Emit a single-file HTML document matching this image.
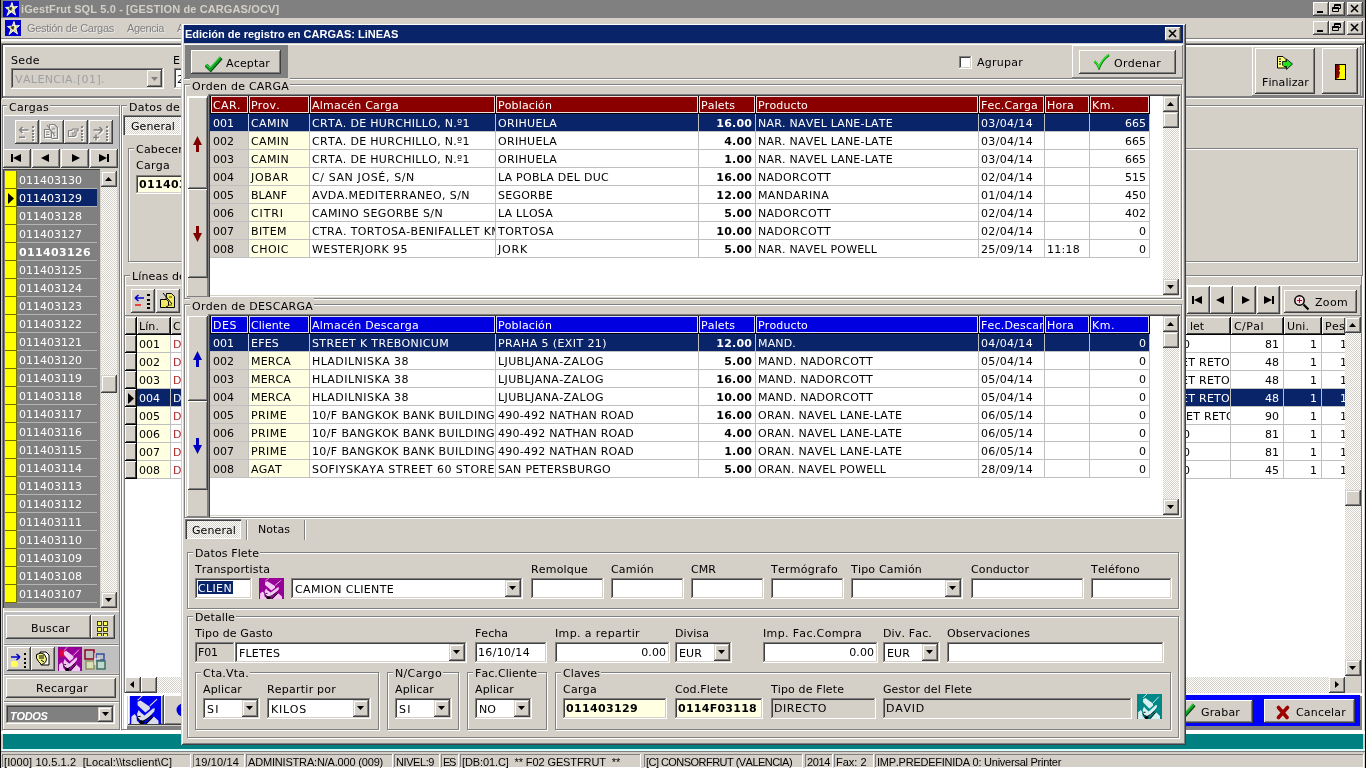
<!DOCTYPE html>
<html lang="es"><head><meta charset="utf-8"><title>iGestFrut SQL 5.0 - GESTION de CARGAS/OCV</title>
<style>
*{box-sizing:border-box;margin:0;padding:0}
html,body{width:1366px;height:768px;overflow:hidden;background:#d4d0c8}
#w{left:0;top:0;width:1366px;height:768px;will-change:transform}
body{position:relative;font-family:"DejaVu Sans","Liberation Sans",sans-serif;font-size:11px;line-height:14px;color:#000;font-kerning:none;-webkit-font-smoothing:antialiased}
div,span,svg,b,i{position:absolute;white-space:pre}
.t{height:14px}
.tah{font-family:"Liberation Sans","DejaVu Sans",sans-serif}
.w{color:#fff}
.b{font-weight:bold}
.r{background:#d4d0c8;box-shadow:inset -1px -1px #404040,inset 1px 1px #fff,inset -2px -2px #808080,inset 2px 2px #d4d0c8}
.rs{background:#d4d0c8;box-shadow:inset -1px -1px #404040,inset 1px 1px #d4d0c8,inset -2px -2px #808080,inset 2px 2px #fff}
.r1{background:#d4d0c8;box-shadow:inset -1px -1px #808080,inset 1px 1px #fff}
.s{background:#fff;box-shadow:inset -1px -1px #fff,inset 1px 1px #808080,inset -2px -2px #d4d0c8,inset 2px 2px #404040}
.s1{box-shadow:inset -1px -1px #fff,inset 1px 1px #808080}
.g{border:1px solid #808080;box-shadow:inset 1px 1px #fff,1px 1px #fff}
.gl{background:#d4d0c8;padding:0 2px}
.f{background:#d4d0c8}
.dis{color:#808080;text-shadow:1px 1px rgba(255,255,255,.55)}
.dith{background-image:conic-gradient(#fff 25%,#d4d0c8 0 50%,#fff 0 75%,#d4d0c8 0);background-size:2px 2px}
.hc{background:#8a0000;border:1px solid #f4dcdc}
.hb{background:#0000e0;border:1px solid #dcdcf8}
.hg{background:#d4d0c8;box-shadow:inset 1px 1px #fff,inset -1px -1px #404040}
</style></head>
<body><div id="w">
<div style="left:0px;top:0px;width:1366px;height:18px;background:#808080"></div>
<svg style="left:3px;top:1px" width="16" height="16"><rect width="16" height="16" fill="#0000c8"/><polygon points="9,1.5 12.5,14 2.5,6.5 14.5,5.5 4,14.5" fill="#d8d860" stroke="#fff" stroke-width=".9" stroke-linejoin="round"/><polygon points="6,6.5 9,6 8.5,9.5 6.5,9" fill="#282838"/></svg>
<span class="t tah b" style="left:21px;top:2px;letter-spacing:0.12px;color:#d4d0c8">iGestFrut SQL 5.0 - [GESTION de CARGAS/OCV]</span>
<div class="r" style="left:1313px;top:2px;width:16px;height:14px;"></div>
<div style="left:1317px;top:11px;width:6px;height:2px;background:#000"></div>
<div class="r" style="left:1329px;top:2px;width:16px;height:14px;"></div>
<svg style="left:1329px;top:2px" width="16" height="14"><path d="M5.5 2.5h6v4h-6zM5.5 3.5h6M3.5 5.5h6v4h-6zM3.5 6.5h6" fill="none" stroke="#000"/></svg>
<div class="r" style="left:1347px;top:2px;width:16px;height:14px;"></div>
<svg style="left:1347px;top:2px" width="16" height="14"><path d="M4 3l7 7M11 3l-7 7" stroke="#000" stroke-width="1.6"/></svg>
<svg style="left:5px;top:20px" width="16" height="16"><rect width="16" height="16" fill="#0000c8"/><polygon points="9,1.5 12.5,14 2.5,6.5 14.5,5.5 4,14.5" fill="#d8d860" stroke="#fff" stroke-width=".9" stroke-linejoin="round"/><polygon points="6,6.5 9,6 8.5,9.5 6.5,9" fill="#282838"/></svg>
<span class="t dis tah" style="left:27px;top:21px;letter-spacing:-0.28px;">Gestión de Cargas</span>
<span class="t dis tah" style="left:127px;top:21px;letter-spacing:-0.39px;">Agencia</span>
<span class="t dis tah" style="left:177px;top:21px;">A</span>
<div class="r" style="left:1313px;top:21px;width:16px;height:14px;"></div>
<div style="left:1317px;top:30px;width:6px;height:2px;background:#000"></div>
<div class="r" style="left:1329px;top:21px;width:16px;height:14px;"></div>
<svg style="left:1329px;top:21px" width="16" height="14"><path d="M5.5 2.5h6v4h-6zM5.5 3.5h6M3.5 5.5h6v4h-6zM3.5 6.5h6" fill="none" stroke="#000"/></svg>
<div class="r" style="left:1347px;top:21px;width:16px;height:14px;"></div>
<svg style="left:1347px;top:21px" width="16" height="14"><path d="M4 3l7 7M11 3l-7 7" stroke="#000" stroke-width="1.6"/></svg>
<div style="left:1px;top:39px;width:1364px;height:2px;background:#fff"></div>
<div style="left:0px;top:0px;width:1px;height:768px;background:#000"></div>
<div style="left:1365px;top:0px;width:1px;height:768px;background:#000"></div>
<div style="left:1px;top:38px;width:1364px;height:1px;background:#808080"></div>
<div style="left:1px;top:43px;width:1364px;height:56px;box-shadow:inset 1px 1px #808080,inset -1px -1px #fff,inset 2px 2px #404040,inset -3px -3px #808080,inset 4px 4px #fff"></div>
<span class="t" style="left:11px;top:54px;letter-spacing:0.38px;">Sede</span>
<div class="s" style="left:11px;top:68px;width:153px;height:21px;background:#d4d0c8;"></div>
<span class="t" style="left:15px;top:73px;letter-spacing:0.40px;color:#a0a0a0;text-shadow:none">VALENCIA.[01].</span>
<div class="r" style="left:147px;top:70px;width:15px;height:17px;"></div>
<svg style="left:151px;top:77px" width="7" height="4"><polygon points="0,0 7,0 3.5,4" fill="#808080"/></svg>
<span class="t" style="left:173px;top:54px;">E</span>
<div class="s" style="left:174px;top:68px;width:40px;height:21px;background:#fff;"></div>
<span class="t" style="left:177px;top:73px;">2</span>
<div class="r1" style="left:1252px;top:46px;width:109px;height:50px;"></div>
<div class="r" style="left:1255px;top:48px;width:60px;height:46px;"></div>
<span class="t" style="left:1262px;top:76px;letter-spacing:0.08px;">Finalizar</span>
<svg style="left:1277px;top:56px" width="17" height="16"><path d="M.5 .5h5.5l3 3v8.5H.5z" fill="#ffff80" stroke="#000"/><path d="M2 3h2M2 5.5h2M2 8h2" stroke="#000"/><path d="M5.5 5.5h4v-2.5l6 5-6 5.5v-3h-2.5l-1.5-1.5z" fill="#20e020" stroke="#000" stroke-width=".8"/></svg>
<div class="r" style="left:1322px;top:48px;width:36px;height:46px;"></div>
<svg style="left:1335px;top:64px" width="12" height="16"><rect x=".5" y=".5" width="10" height="15" fill="#ffff00" stroke="#000"/><path d="M1 1h3.5l.5 7-1 5.5L1 15z" fill="#800000"/><rect x="4" y="6" width="1" height="1.5" fill="#ff0"/></svg>
<div class="g" style="left:2px;top:105px;width:118px;height:625px;"></div>
<div class="f" style="left:7px;top:99px;width:43px;height:14px;"></div>
<span class="t" style="left:9px;top:101px;letter-spacing:0.27px;">Cargas</span>
<div style="left:4px;top:115px;width:115px;height:34px;background:#c0c0c0;box-shadow:inset 0 1px #fff"></div>
<div class="r" style="left:15px;top:120px;width:24px;height:24px;"></div>
<svg style="left:15px;top:120px" width="24" height="24"><g transform="translate(1,1)"><rect x="17" y="6" width="2" height="2" fill="#fff"/><rect x="17" y="10" width="2" height="2" fill="#fff"/><rect x="17" y="13" width="2" height="2" fill="#fff"/><rect x="17" y="16" width="2" height="2" fill="#fff"/><rect x="17" y="19" width="2" height="2" fill="#fff"/><path d="M4.5 10h9M4.5 10l3-3M4.5 10l3 3" stroke="#fff" stroke-width="1.6" fill="none"/><rect x="4" y="16.5" width="6" height="1.6" fill="#fff"/></g><rect x="17" y="6" width="2" height="2" fill="#808080"/><rect x="17" y="10" width="2" height="2" fill="#808080"/><rect x="17" y="13" width="2" height="2" fill="#808080"/><rect x="17" y="16" width="2" height="2" fill="#808080"/><rect x="17" y="19" width="2" height="2" fill="#808080"/><path d="M4.5 10h9M4.5 10l3-3M4.5 10l3 3" stroke="#808080" stroke-width="1.6" fill="none"/><rect x="4" y="16.5" width="6" height="1.6" fill="#808080"/></svg>
<div class="r" style="left:40px;top:120px;width:24px;height:24px;"></div>
<svg style="left:40px;top:120px" width="24" height="24"><g transform="translate(1,1)"><path d="M9.5 4.5h5l3 3v11h-6M9.5 4.5v4M7 5l8 11M4.5 9.5h5l2 2v6h-7zM12 9h3M13 13h2M6 12h3M6 14.5h3" stroke="#fff" stroke-width="1.1" fill="none"/></g><path d="M9.5 4.5h5l3 3v11h-6M9.5 4.5v4M7 5l8 11M4.5 9.5h5l2 2v6h-7zM12 9h3M13 13h2M6 12h3M6 14.5h3" stroke="#808080" stroke-width="1.1" fill="none"/></svg>
<div class="r" style="left:64px;top:120px;width:24px;height:24px;"></div>
<svg style="left:64px;top:120px" width="24" height="24"><g transform="translate(1,1)"><rect x="17" y="6" width="2" height="2" fill="#fff"/><rect x="17" y="10" width="2" height="2" fill="#fff"/><rect x="17" y="13" width="2" height="2" fill="#fff"/><rect x="17" y="16" width="2" height="2" fill="#fff"/><rect x="17" y="19" width="2" height="2" fill="#fff"/><path d="M4.5 10.5h3l1.5-1.5h5v2h-4M4.5 10.5v6h6l1.5-1.5v-3M8 13h3M8 15h2.5" stroke="#fff" stroke-width="1.2" fill="none"/></g><rect x="17" y="6" width="2" height="2" fill="#808080"/><rect x="17" y="10" width="2" height="2" fill="#808080"/><rect x="17" y="13" width="2" height="2" fill="#808080"/><rect x="17" y="16" width="2" height="2" fill="#808080"/><rect x="17" y="19" width="2" height="2" fill="#808080"/><path d="M4.5 10.5h3l1.5-1.5h5v2h-4M4.5 10.5v6h6l1.5-1.5v-3M8 13h3M8 15h2.5" stroke="#808080" stroke-width="1.2" fill="none"/></svg>
<div class="r" style="left:89px;top:120px;width:24px;height:24px;"></div>
<svg style="left:89px;top:120px" width="24" height="24"><g transform="translate(1,1)"><rect x="17" y="6" width="2" height="2" fill="#fff"/><rect x="17" y="10" width="2" height="2" fill="#fff"/><rect x="17" y="13" width="2" height="2" fill="#fff"/><rect x="17" y="16" width="2" height="2" fill="#fff"/><rect x="17" y="19" width="2" height="2" fill="#fff"/><path d="M4.5 10h9M13.5 10l-3-3M13.5 10l-3 3M4 17.5h6M7 14.5v6" stroke="#fff" stroke-width="1.6" fill="none"/><path d="M11.5 12l-2.5 2.5" stroke="#fff"/></g><rect x="17" y="6" width="2" height="2" fill="#808080"/><rect x="17" y="10" width="2" height="2" fill="#808080"/><rect x="17" y="13" width="2" height="2" fill="#808080"/><rect x="17" y="16" width="2" height="2" fill="#808080"/><rect x="17" y="19" width="2" height="2" fill="#808080"/><path d="M4.5 10h9M13.5 10l-3-3M13.5 10l-3 3M4 17.5h6M7 14.5v6" stroke="#808080" stroke-width="1.6" fill="none"/><path d="M11.5 12l-2.5 2.5" stroke="#808080"/></svg>
<div class="r" style="left:3px;top:149px;width:28px;height:19px;"></div>
<div style="left:11px;top:154px;width:2px;height:8px;background:#000"></div>
<svg style="left:13px;top:154px" width="8" height="8"><polygon points="8,0 8,8 0,4.0" fill="#000"/></svg>
<div class="r" style="left:32px;top:149px;width:28px;height:19px;"></div>
<svg style="left:41px;top:154px" width="8" height="8"><polygon points="8,0 8,8 0,4.0" fill="#000"/></svg>
<div class="r" style="left:61px;top:149px;width:28px;height:19px;"></div>
<svg style="left:72px;top:154px" width="8" height="8"><polygon points="0,0 0,8 8,4.0" fill="#000"/></svg>
<div class="r" style="left:90px;top:149px;width:28px;height:19px;"></div>
<svg style="left:99px;top:154px" width="8" height="8"><polygon points="0,0 0,8 8,4.0" fill="#000"/></svg>
<div style="left:107px;top:154px;width:2px;height:8px;background:#000"></div>
<div style="left:3px;top:169px;width:97px;height:439px;background:#808080;box-shadow:inset 1px 1px #404040"></div>
<div style="left:5px;top:171px;width:12px;height:18px;background:#ffff00;box-shadow:inset -1px -1px #707000"></div>
<div style="left:17px;top:171px;width:80px;height:17px;background:#808080"></div>
<div style="left:17px;top:188px;width:80px;height:1px;background:#b4b4b4"></div>
<span class="t w" style="left:19px;top:174px;">011403130</span>
<div style="left:5px;top:189px;width:12px;height:18px;background:#ffff00;box-shadow:inset -1px -1px #707000"></div>
<div style="left:17px;top:189px;width:80px;height:17px;background:#0a246a"></div>
<div style="left:17px;top:206px;width:80px;height:1px;background:#b4b4b4"></div>
<span class="t w" style="left:19px;top:192px;">011403129</span>
<svg style="left:8px;top:193px" width="6" height="11"><polygon points="0,0 0,11 6,5.5" fill="#000"/></svg>
<div style="left:5px;top:207px;width:12px;height:18px;background:#ffff00;box-shadow:inset -1px -1px #707000"></div>
<div style="left:17px;top:207px;width:80px;height:17px;background:#808080"></div>
<div style="left:17px;top:224px;width:80px;height:1px;background:#b4b4b4"></div>
<span class="t w" style="left:19px;top:210px;">011403128</span>
<div style="left:5px;top:225px;width:12px;height:18px;background:#ffff00;box-shadow:inset -1px -1px #707000"></div>
<div style="left:17px;top:225px;width:80px;height:17px;background:#808080"></div>
<div style="left:17px;top:242px;width:80px;height:1px;background:#b4b4b4"></div>
<span class="t w" style="left:19px;top:228px;">011403127</span>
<div style="left:5px;top:243px;width:12px;height:18px;background:#ffff00;box-shadow:inset -1px -1px #707000"></div>
<div style="left:17px;top:243px;width:80px;height:17px;background:#808080"></div>
<div style="left:17px;top:260px;width:80px;height:1px;background:#b4b4b4"></div>
<span class="t w b" style="left:19px;top:246px;letter-spacing:0.35px;">011403126</span>
<div style="left:5px;top:261px;width:12px;height:18px;background:#ffff00;box-shadow:inset -1px -1px #707000"></div>
<div style="left:17px;top:261px;width:80px;height:17px;background:#808080"></div>
<div style="left:17px;top:278px;width:80px;height:1px;background:#b4b4b4"></div>
<span class="t w" style="left:19px;top:264px;">011403125</span>
<div style="left:5px;top:279px;width:12px;height:18px;background:#ffff00;box-shadow:inset -1px -1px #707000"></div>
<div style="left:17px;top:279px;width:80px;height:17px;background:#808080"></div>
<div style="left:17px;top:296px;width:80px;height:1px;background:#b4b4b4"></div>
<span class="t w" style="left:19px;top:282px;">011403124</span>
<div style="left:5px;top:297px;width:12px;height:18px;background:#ffff00;box-shadow:inset -1px -1px #707000"></div>
<div style="left:17px;top:297px;width:80px;height:17px;background:#808080"></div>
<div style="left:17px;top:314px;width:80px;height:1px;background:#b4b4b4"></div>
<span class="t w" style="left:19px;top:300px;">011403123</span>
<div style="left:5px;top:315px;width:12px;height:18px;background:#ffff00;box-shadow:inset -1px -1px #707000"></div>
<div style="left:17px;top:315px;width:80px;height:17px;background:#808080"></div>
<div style="left:17px;top:332px;width:80px;height:1px;background:#b4b4b4"></div>
<span class="t w" style="left:19px;top:318px;">011403122</span>
<div style="left:5px;top:333px;width:12px;height:18px;background:#ffff00;box-shadow:inset -1px -1px #707000"></div>
<div style="left:17px;top:333px;width:80px;height:17px;background:#808080"></div>
<div style="left:17px;top:350px;width:80px;height:1px;background:#b4b4b4"></div>
<span class="t w" style="left:19px;top:336px;">011403121</span>
<div style="left:5px;top:351px;width:12px;height:18px;background:#ffff00;box-shadow:inset -1px -1px #707000"></div>
<div style="left:17px;top:351px;width:80px;height:17px;background:#808080"></div>
<div style="left:17px;top:368px;width:80px;height:1px;background:#b4b4b4"></div>
<span class="t w" style="left:19px;top:354px;">011403120</span>
<div style="left:5px;top:369px;width:12px;height:18px;background:#ffff00;box-shadow:inset -1px -1px #707000"></div>
<div style="left:17px;top:369px;width:80px;height:17px;background:#808080"></div>
<div style="left:17px;top:386px;width:80px;height:1px;background:#b4b4b4"></div>
<span class="t w" style="left:19px;top:372px;">011403119</span>
<div style="left:5px;top:387px;width:12px;height:18px;background:#ffff00;box-shadow:inset -1px -1px #707000"></div>
<div style="left:17px;top:387px;width:80px;height:17px;background:#808080"></div>
<div style="left:17px;top:404px;width:80px;height:1px;background:#b4b4b4"></div>
<span class="t w" style="left:19px;top:390px;">011403118</span>
<div style="left:5px;top:405px;width:12px;height:18px;background:#ffff00;box-shadow:inset -1px -1px #707000"></div>
<div style="left:17px;top:405px;width:80px;height:17px;background:#808080"></div>
<div style="left:17px;top:422px;width:80px;height:1px;background:#b4b4b4"></div>
<span class="t w" style="left:19px;top:408px;">011403117</span>
<div style="left:5px;top:423px;width:12px;height:18px;background:#ffff00;box-shadow:inset -1px -1px #707000"></div>
<div style="left:17px;top:423px;width:80px;height:17px;background:#808080"></div>
<div style="left:17px;top:440px;width:80px;height:1px;background:#b4b4b4"></div>
<span class="t w" style="left:19px;top:426px;">011403116</span>
<div style="left:5px;top:441px;width:12px;height:18px;background:#ffff00;box-shadow:inset -1px -1px #707000"></div>
<div style="left:17px;top:441px;width:80px;height:17px;background:#808080"></div>
<div style="left:17px;top:458px;width:80px;height:1px;background:#b4b4b4"></div>
<span class="t w" style="left:19px;top:444px;">011403115</span>
<div style="left:5px;top:459px;width:12px;height:18px;background:#ffff00;box-shadow:inset -1px -1px #707000"></div>
<div style="left:17px;top:459px;width:80px;height:17px;background:#808080"></div>
<div style="left:17px;top:476px;width:80px;height:1px;background:#b4b4b4"></div>
<span class="t w" style="left:19px;top:462px;">011403114</span>
<div style="left:5px;top:477px;width:12px;height:18px;background:#ffff00;box-shadow:inset -1px -1px #707000"></div>
<div style="left:17px;top:477px;width:80px;height:17px;background:#808080"></div>
<div style="left:17px;top:494px;width:80px;height:1px;background:#b4b4b4"></div>
<span class="t w" style="left:19px;top:480px;">011403113</span>
<div style="left:5px;top:495px;width:12px;height:18px;background:#ffff00;box-shadow:inset -1px -1px #707000"></div>
<div style="left:17px;top:495px;width:80px;height:17px;background:#808080"></div>
<div style="left:17px;top:512px;width:80px;height:1px;background:#b4b4b4"></div>
<span class="t w" style="left:19px;top:498px;">011403112</span>
<div style="left:5px;top:513px;width:12px;height:18px;background:#ffff00;box-shadow:inset -1px -1px #707000"></div>
<div style="left:17px;top:513px;width:80px;height:17px;background:#808080"></div>
<div style="left:17px;top:530px;width:80px;height:1px;background:#b4b4b4"></div>
<span class="t w" style="left:19px;top:516px;">011403111</span>
<div style="left:5px;top:531px;width:12px;height:18px;background:#ffff00;box-shadow:inset -1px -1px #707000"></div>
<div style="left:17px;top:531px;width:80px;height:17px;background:#808080"></div>
<div style="left:17px;top:548px;width:80px;height:1px;background:#b4b4b4"></div>
<span class="t w" style="left:19px;top:534px;">011403110</span>
<div style="left:5px;top:549px;width:12px;height:18px;background:#ffff00;box-shadow:inset -1px -1px #707000"></div>
<div style="left:17px;top:549px;width:80px;height:17px;background:#808080"></div>
<div style="left:17px;top:566px;width:80px;height:1px;background:#b4b4b4"></div>
<span class="t w" style="left:19px;top:552px;">011403109</span>
<div style="left:5px;top:567px;width:12px;height:18px;background:#ffff00;box-shadow:inset -1px -1px #707000"></div>
<div style="left:17px;top:567px;width:80px;height:17px;background:#808080"></div>
<div style="left:17px;top:584px;width:80px;height:1px;background:#b4b4b4"></div>
<span class="t w" style="left:19px;top:570px;">011403108</span>
<div style="left:5px;top:585px;width:12px;height:18px;background:#ffff00;box-shadow:inset -1px -1px #707000"></div>
<div style="left:17px;top:585px;width:80px;height:17px;background:#808080"></div>
<div style="left:17px;top:602px;width:80px;height:1px;background:#b4b4b4"></div>
<span class="t w" style="left:19px;top:588px;">011403107</span>
<div class="dith" style="left:101px;top:171px;width:16px;height:437px;"></div>
<div class="rs" style="left:101px;top:171px;width:16px;height:16px;"></div>
<svg style="left:105px;top:177px" width="7" height="4"><polygon points="0,4 7,4 3.5,0" fill="#000"/></svg>
<div class="rs" style="left:101px;top:592px;width:16px;height:16px;"></div>
<svg style="left:105px;top:598px" width="7" height="4"><polygon points="0,0 7,0 3.5,4" fill="#000"/></svg>
<div class="rs" style="left:101px;top:375px;width:16px;height:18px;"></div>
<div style="left:4px;top:611px;width:115px;height:32px;background:#c0c0c0;box-shadow:inset 0 1px #fff"></div>
<div class="r" style="left:6px;top:615px;width:85px;height:24px;"></div>
<span class="t" style="left:31px;top:622px;letter-spacing:0.24px;">Buscar</span>
<div class="r" style="left:91px;top:615px;width:24px;height:24px;"></div>
<svg style="left:97px;top:621px" width="12" height="15"><rect x="0.5" y="0.5" width="4" height="4" fill="#ffff50" stroke="#303000" stroke-width=".9"/><rect x="6.5" y="0.5" width="4" height="4" fill="#ffff50" stroke="#303000" stroke-width=".9"/><rect x="0.5" y="6.5" width="4" height="4" fill="#ffff50" stroke="#303000" stroke-width=".9"/><rect x="6.5" y="6.5" width="4" height="4" fill="#ffff50" stroke="#303000" stroke-width=".9"/><rect x="0.5" y="12.5" width="4" height="4" fill="#ffff50" stroke="#303000" stroke-width=".9"/><rect x="6.5" y="12.5" width="4" height="4" fill="#ffff50" stroke="#303000" stroke-width=".9"/></svg>
<div style="left:4px;top:644px;width:115px;height:1px;background:#808080"></div>
<div style="left:4px;top:645px;width:115px;height:1px;background:#fff"></div>
<div style="left:4px;top:646px;width:115px;height:27px;background:#c0c0c0"></div>
<div class="r" style="left:7px;top:647px;width:24px;height:24px;"></div>
<svg style="left:7px;top:647px" width="24" height="24"><rect x="17" y="6" width="2" height="2"/><rect x="17" y="11" width="2" height="2"/><rect x="17" y="15" width="2" height="2"/><rect x="17" y="19" width="2" height="2"/><path d="M4 10h9M13 10l-3.5-3M13 10l-3.5 3" stroke="#0000d0" stroke-width="1.6" fill="none"/><rect x="4" y="14" width="7" height="6" rx="2" fill="#ffff60"/></svg>
<div class="r" style="left:31px;top:647px;width:24px;height:24px;"></div>
<svg style="left:31px;top:647px" width="24" height="24"><path d="M9 5h6l3 3v10h-8z" fill="#fff" stroke="#000"/><path d="M5.5 7.5q5-3 8 0l2 4q0 5-5 6l-3-3q-3-3-2-7z" fill="#f0f080" stroke="#000"/><path d="M8 9h5M8 11h5M10 13l3 2" stroke="#000"/></svg>
<svg style="left:58px;top:647px" width="24" height="24" viewBox="0 0 25 25" preserveAspectRatio="none"><rect width="25" height="25" fill="#960096"/><rect x="2" y="3" width="6" height="7" fill="#e00040"/><path d="M6.1 3.8L9.9 0M16 8.9l5.8-6.1" stroke="#f4c8f4" stroke-width=".9"/><path d="M6.1 5.2l2.4-1.2 7.5 5.6v2.1l-3.6 3.1-6.3-6.6zM7 12.5l1.5 2 3.2 2.9 6.8-6.2 1.5-.2-.3 2.6-5.7 6.9-3 2-4-1.5-1.4-5zM1 25l.2-6.7 2.6-2.3 1.4 2.3.4 3.7 2.9 3zM13.6 25l5.6-6.7 3.8 3.7v3z" fill="#f4c8f4"/><path d="M6.5 18.3h2M5.8 19.5q1.2 2.5 4.2 3 3-1 7.5-5.3M13 24.5l5.5-6" stroke="#000" fill="none" stroke-width=".9"/><ellipse cx="9.6" cy="23.6" rx="2.2" ry="1.4"/></svg>
<svg style="left:83px;top:647px" width="24" height="24"><rect x="2" y="3" width="9" height="9" fill="none" stroke="#900020" stroke-width="1.5"/><rect x="13" y="7" width="8" height="6" fill="none" stroke="#3050a0" stroke-width="1.5"/><rect x="3" y="14" width="8" height="8" fill="#d8e0b8" stroke="#909060" stroke-width="1.5"/><rect x="14" y="14" width="8" height="8" fill="#c0d8d0" stroke="#407060" stroke-width="1.5"/><path d="M11 12h6M12 6v12" stroke="#fff"/></svg>
<div style="left:4px;top:674px;width:115px;height:1px;background:#808080"></div>
<div style="left:4px;top:675px;width:115px;height:1px;background:#fff"></div>
<div class="r" style="left:6px;top:678px;width:110px;height:20px;"></div>
<span class="t" style="left:36px;top:682px;letter-spacing:0.25px;">Recargar</span>
<div style="left:4px;top:701px;width:115px;height:1px;background:#808080"></div>
<div style="left:4px;top:702px;width:115px;height:1px;background:#fff"></div>
<div class="s" style="left:6px;top:705px;width:109px;height:19px;background:#808080;"></div>
<span class="t w b tah" style="left:10px;top:709px;letter-spacing:-0.30px;font-style:italic">TODOS</span>
<div class="rs" style="left:98px;top:707px;width:15px;height:15px;"></div>
<svg style="left:102px;top:712px" width="7" height="4"><polygon points="0,0 7,0 3.5,4" fill="#000"/></svg>
<div class="g" style="left:121px;top:105px;width:1242px;height:625px;"></div>
<div class="f" style="left:127px;top:99px;width:54px;height:14px;"></div>
<span class="t" style="left:129px;top:101px;letter-spacing:0.22px;">Datos de</span>
<div class="dith" style="left:123px;top:115px;width:58px;height:20px;box-shadow:inset 1px 1px #808080,inset 2px 2px #404040,inset -1px -1px #fff"></div>
<span class="t" style="left:131px;top:120px;letter-spacing:0.09px;">General</span>
<div class="g" style="left:128px;top:148px;width:1230px;height:114px;"></div>
<div class="f" style="left:134px;top:142px;width:57px;height:14px;"></div>
<span class="t" style="left:136px;top:143px;letter-spacing:0.22px;">Cabecera</span>
<span class="t" style="left:136px;top:159px;letter-spacing:0.27px;">Carga</span>
<div class="s" style="left:136px;top:175px;width:60px;height:19px;background:#ffffe1;"></div>
<span class="t b" style="left:139px;top:178px;letter-spacing:0.35px;">011403</span>
<div class="g" style="left:124px;top:275px;width:1238px;height:455px;"></div>
<div class="f" style="left:130px;top:269px;width:57px;height:14px;"></div>
<span class="t" style="left:132px;top:270px;letter-spacing:0.15px;">Líneas de</span>
<div style="left:125px;top:285px;width:1236px;height:1px;background:#fff"></div>
<div style="left:125px;top:315px;width:1236px;height:1px;background:#808080"></div>
<div class="r" style="left:131px;top:289px;width:24px;height:24px;"></div>
<svg style="left:131px;top:289px" width="24" height="24"><rect x="16" y="5" width="3" height="2"/><rect x="16" y="10" width="3" height="2"/><rect x="16" y="14" width="3" height="2"/><rect x="16" y="18" width="3" height="2"/><path d="M4 9h9M4 9l3.5-3M4 9l3.5 3" stroke="#0000d0" stroke-width="1.6" fill="none"/><rect x="4" y="15" width="6" height="2" fill="#f04040"/></svg>
<div class="r" style="left:156px;top:289px;width:24px;height:24px;"></div>
<svg style="left:156px;top:289px" width="24" height="24"><path d="M10.5 4.5h5l3 3v11h-9z" fill="#f0e860" stroke="#000"/><path d="M7 4l9 11" stroke="#000"/><path d="M4.5 10.5h6l2 2v4l-3 2h-5z" fill="#f0e860" stroke="#000"/><path d="M13 8h3M13 16h3" stroke="#404000"/></svg>
<div style="left:125px;top:317px;width:1221px;height:360px;background:#fff"></div>
<div style="left:125px;top:317px;width:1221px;height:18px;background:#000"></div>
<div class="hg" style="left:125px;top:317px;width:11px;height:17px;"></div>
<div class="hg" style="left:137px;top:317px;width:33px;height:17px;"></div>
<div class="hg" style="left:171px;top:317px;width:60px;height:17px;"></div>
<span class="t" style="left:139px;top:320px;letter-spacing:0.09px;">Lín.</span>
<span class="t" style="left:173px;top:320px;">C</span>
<div class="hg" style="left:125px;top:335px;width:11px;height:17px;"></div>
<div style="left:125px;top:352px;width:12px;height:1px;background:#000"></div>
<div style="left:137px;top:335px;width:33px;height:17px;background:#ffffe1"></div>
<div style="left:171px;top:335px;width:12px;height:17px;background:#fff"></div>
<div style="left:137px;top:352px;width:50px;height:1px;background:#c0c0c0"></div>
<div style="left:170px;top:335px;width:1px;height:18px;background:#c0c0c0"></div>
<span class="t" style="left:139px;top:338px;">001</span>
<span class="t" style="left:173px;top:338px;color:#b02828">D</span>
<div class="hg" style="left:125px;top:353px;width:11px;height:17px;"></div>
<div style="left:125px;top:370px;width:12px;height:1px;background:#000"></div>
<div style="left:137px;top:353px;width:33px;height:17px;background:#ffffe1"></div>
<div style="left:171px;top:353px;width:12px;height:17px;background:#fff"></div>
<div style="left:137px;top:370px;width:50px;height:1px;background:#c0c0c0"></div>
<div style="left:170px;top:353px;width:1px;height:18px;background:#c0c0c0"></div>
<span class="t" style="left:139px;top:356px;">002</span>
<span class="t" style="left:173px;top:356px;color:#b02828">D</span>
<div class="hg" style="left:125px;top:371px;width:11px;height:17px;"></div>
<div style="left:125px;top:388px;width:12px;height:1px;background:#000"></div>
<div style="left:137px;top:371px;width:33px;height:17px;background:#ffffe1"></div>
<div style="left:171px;top:371px;width:12px;height:17px;background:#fff"></div>
<div style="left:137px;top:388px;width:50px;height:1px;background:#c0c0c0"></div>
<div style="left:170px;top:371px;width:1px;height:18px;background:#c0c0c0"></div>
<span class="t" style="left:139px;top:374px;">003</span>
<span class="t" style="left:173px;top:374px;color:#b02828">D</span>
<div class="hg" style="left:125px;top:389px;width:11px;height:17px;"></div>
<div style="left:125px;top:406px;width:12px;height:1px;background:#000"></div>
<div style="left:137px;top:389px;width:33px;height:17px;background:#0a246a"></div>
<div style="left:171px;top:389px;width:12px;height:17px;background:#0a246a"></div>
<div style="left:137px;top:406px;width:50px;height:1px;background:#c0c0c0"></div>
<div style="left:170px;top:389px;width:1px;height:18px;background:#c0c0c0"></div>
<span class="t w" style="left:139px;top:392px;">004</span>
<span class="t w" style="left:173px;top:392px;">D</span>
<svg style="left:128px;top:393px" width="6" height="11"><polygon points="0,0 0,11 6,5.5" fill="#000"/></svg>
<div class="hg" style="left:125px;top:407px;width:11px;height:17px;"></div>
<div style="left:125px;top:424px;width:12px;height:1px;background:#000"></div>
<div style="left:137px;top:407px;width:33px;height:17px;background:#ffffe1"></div>
<div style="left:171px;top:407px;width:12px;height:17px;background:#fff"></div>
<div style="left:137px;top:424px;width:50px;height:1px;background:#c0c0c0"></div>
<div style="left:170px;top:407px;width:1px;height:18px;background:#c0c0c0"></div>
<span class="t" style="left:139px;top:410px;">005</span>
<span class="t" style="left:173px;top:410px;color:#b02828">D</span>
<div class="hg" style="left:125px;top:425px;width:11px;height:17px;"></div>
<div style="left:125px;top:442px;width:12px;height:1px;background:#000"></div>
<div style="left:137px;top:425px;width:33px;height:17px;background:#ffffe1"></div>
<div style="left:171px;top:425px;width:12px;height:17px;background:#fff"></div>
<div style="left:137px;top:442px;width:50px;height:1px;background:#c0c0c0"></div>
<div style="left:170px;top:425px;width:1px;height:18px;background:#c0c0c0"></div>
<span class="t" style="left:139px;top:428px;">006</span>
<span class="t" style="left:173px;top:428px;color:#b02828">D</span>
<div class="hg" style="left:125px;top:443px;width:11px;height:17px;"></div>
<div style="left:125px;top:460px;width:12px;height:1px;background:#000"></div>
<div style="left:137px;top:443px;width:33px;height:17px;background:#ffffe1"></div>
<div style="left:171px;top:443px;width:12px;height:17px;background:#fff"></div>
<div style="left:137px;top:460px;width:50px;height:1px;background:#c0c0c0"></div>
<div style="left:170px;top:443px;width:1px;height:18px;background:#c0c0c0"></div>
<span class="t" style="left:139px;top:446px;">007</span>
<span class="t" style="left:173px;top:446px;color:#b02828">D</span>
<div class="hg" style="left:125px;top:461px;width:11px;height:17px;"></div>
<div style="left:125px;top:478px;width:12px;height:1px;background:#000"></div>
<div style="left:137px;top:461px;width:33px;height:17px;background:#ffffe1"></div>
<div style="left:171px;top:461px;width:12px;height:17px;background:#fff"></div>
<div style="left:137px;top:478px;width:50px;height:1px;background:#c0c0c0"></div>
<div style="left:170px;top:461px;width:1px;height:18px;background:#c0c0c0"></div>
<span class="t" style="left:139px;top:464px;">008</span>
<span class="t" style="left:173px;top:464px;color:#b02828">D</span>
<div style="left:136px;top:335px;width:1px;height:144px;background:#000"></div>
<div class="dith" style="left:125px;top:677px;width:1220px;height:16px;"></div>
<div class="r" style="left:125px;top:677px;width:16px;height:16px;"></div>
<svg style="left:130px;top:681px" width="4" height="7"><polygon points="4,0 4,7 0,3.5" fill="#000"/></svg>
<div class="r" style="left:141px;top:677px;width:16px;height:16px;"></div>
<div style="left:124px;top:693px;width:1238px;height:36px;box-shadow:inset 3px 3px #fff,inset -3px -3px #808080"></div>
<div class="r" style="left:128px;top:695px;width:36px;height:30px;"></div>
<svg style="left:130px;top:696px" width="31" height="28" viewBox="0 0 25 25" preserveAspectRatio="none"><rect width="25" height="25" fill="#0000f0"/><path d="M6.1 3.8L9.9 0M16 8.9l5.8-6.1" stroke="#dcdce8" stroke-width=".9"/><path d="M6.1 5.2l2.4-1.2 7.5 5.6v2.1l-3.6 3.1-6.3-6.6zM7 12.5l1.5 2 3.2 2.9 6.8-6.2 1.5-.2-.3 2.6-5.7 6.9-3 2-4-1.5-1.4-5zM1 25l.2-6.7 2.6-2.3 1.4 2.3.4 3.7 2.9 3zM13.6 25l5.6-6.7 3.8 3.7v3z" fill="#dcdce8"/><path d="M6.5 18.3h2M5.8 19.5q1.2 2.5 4.2 3 3-1 7.5-5.3M13 24.5l5.5-6" stroke="#000" fill="none" stroke-width=".9"/><ellipse cx="9.6" cy="23.6" rx="2.2" ry="1.4"/></svg>
<div class="r" style="left:164px;top:695px;width:36px;height:30px;"></div>
<svg style="left:176px;top:703px" width="14" height="14"><circle cx="7" cy="7" r="6.5" fill="#0000e0"/></svg>
<div class="r" style="left:1187px;top:286px;width:23px;height:28px;"></div>
<div style="left:1192px;top:296px;width:2px;height:8px;background:#000"></div>
<svg style="left:1194px;top:296px" width="8" height="8"><polygon points="8,0 8,8 0,4.0" fill="#000"/></svg>
<div class="r" style="left:1210px;top:286px;width:23px;height:28px;"></div>
<svg style="left:1216px;top:296px" width="8" height="8"><polygon points="8,0 8,8 0,4.0" fill="#000"/></svg>
<div class="r" style="left:1233px;top:286px;width:23px;height:28px;"></div>
<svg style="left:1242px;top:296px" width="8" height="8"><polygon points="0,0 0,8 8,4.0" fill="#000"/></svg>
<div class="r" style="left:1257px;top:286px;width:23px;height:28px;"></div>
<svg style="left:1264px;top:296px" width="8" height="8"><polygon points="0,0 0,8 8,4.0" fill="#000"/></svg>
<div style="left:1272px;top:296px;width:2px;height:8px;background:#000"></div>
<div class="r1" style="left:1281px;top:285px;width:80px;height:31px;"></div>
<div class="r" style="left:1284px;top:290px;width:73px;height:23px;"></div>
<span class="t" style="left:1315px;top:296px;letter-spacing:0.32px;">Zoom</span>
<svg style="left:1293px;top:294px" width="17" height="17"><circle cx="6.5" cy="6.5" r="4.7" fill="#f8dce0" stroke="#000" stroke-width="1.5"/><path d="M4 6.5h5M6.5 4v5" stroke="#a80020"/><path d="M10.5 10.5l5 5" stroke="#000" stroke-width="2.2"/></svg>
<div class="hg" style="left:1186px;top:317px;width:44px;height:17px;"></div>
<span class="t" style="left:1190px;top:320px;letter-spacing:-0.05px;">let</span>
<div class="hg" style="left:1231px;top:317px;width:52px;height:17px;"></div>
<span class="t" style="left:1234px;top:320px;letter-spacing:0.44px;">C/Pal</span>
<div class="hg" style="left:1284px;top:317px;width:37px;height:17px;"></div>
<span class="t" style="left:1287px;top:320px;letter-spacing:0.11px;">Uni.</span>
<div class="hg" style="left:1322px;top:317px;width:23px;height:17px;"></div>
<span class="t" style="left:1325px;top:320px;letter-spacing:0.29px;">Pes</span>
<div style="left:1186px;top:352px;width:159px;height:1px;background:#c0c0c0"></div>
<div style="left:1186px;top:335px;width:44px;height:17px;overflow:hidden">
<span class="t" style="left:-3px;top:3px;">0</span>
</div>
<span class="t" style="right:87px;top:338px;">81</span>
<span class="t" style="right:49px;top:338px;">1</span>
<span class="t" style="left:1340px;top:338px;">1</span>
<div style="left:1186px;top:370px;width:159px;height:1px;background:#c0c0c0"></div>
<div style="left:1186px;top:353px;width:44px;height:17px;overflow:hidden">
<span class="t" style="left:-5px;top:3px;letter-spacing:0.27px;">ET RETO</span>
</div>
<span class="t" style="right:87px;top:356px;">48</span>
<span class="t" style="right:49px;top:356px;">1</span>
<span class="t" style="left:1340px;top:356px;">1</span>
<div style="left:1186px;top:388px;width:159px;height:1px;background:#c0c0c0"></div>
<div style="left:1186px;top:371px;width:44px;height:17px;overflow:hidden">
<span class="t" style="left:-5px;top:3px;letter-spacing:0.27px;">ET RETO</span>
</div>
<span class="t" style="right:87px;top:374px;">48</span>
<span class="t" style="right:49px;top:374px;">1</span>
<span class="t" style="left:1340px;top:374px;">1</span>
<div style="left:1186px;top:389px;width:159px;height:17px;background:#0a246a"></div>
<div style="left:1186px;top:406px;width:159px;height:1px;background:#c0c0c0"></div>
<div style="left:1186px;top:389px;width:44px;height:17px;overflow:hidden">
<span class="t w" style="left:-5px;top:3px;letter-spacing:0.27px;">ET RETO</span>
</div>
<span class="t w" style="right:87px;top:392px;">48</span>
<span class="t w" style="right:49px;top:392px;">1</span>
<span class="t w" style="left:1340px;top:392px;">1</span>
<div style="left:1186px;top:424px;width:159px;height:1px;background:#c0c0c0"></div>
<div style="left:1186px;top:407px;width:44px;height:17px;overflow:hidden">
<span class="t" style="left:0px;top:3px;letter-spacing:0.27px;">ET RETO</span>
</div>
<span class="t" style="right:87px;top:410px;">90</span>
<span class="t" style="right:49px;top:410px;">1</span>
<span class="t" style="left:1340px;top:410px;">1</span>
<div style="left:1186px;top:442px;width:159px;height:1px;background:#c0c0c0"></div>
<div style="left:1186px;top:425px;width:44px;height:17px;overflow:hidden">
<span class="t" style="left:-3px;top:3px;">0</span>
</div>
<span class="t" style="right:87px;top:428px;">81</span>
<span class="t" style="right:49px;top:428px;">1</span>
<span class="t" style="left:1340px;top:428px;">1</span>
<div style="left:1186px;top:460px;width:159px;height:1px;background:#c0c0c0"></div>
<div style="left:1186px;top:443px;width:44px;height:17px;overflow:hidden">
<span class="t" style="left:-3px;top:3px;">0</span>
</div>
<span class="t" style="right:87px;top:446px;">81</span>
<span class="t" style="right:49px;top:446px;">1</span>
<span class="t" style="left:1340px;top:446px;">1</span>
<div style="left:1186px;top:478px;width:159px;height:1px;background:#c0c0c0"></div>
<div style="left:1186px;top:461px;width:44px;height:17px;overflow:hidden">
<span class="t" style="left:-3px;top:3px;">0</span>
</div>
<span class="t" style="right:87px;top:464px;">45</span>
<span class="t" style="right:49px;top:464px;">1</span>
<span class="t" style="left:1340px;top:464px;">1</span>
<div style="left:1230px;top:335px;width:1px;height:144px;background:#c0c0c0"></div>
<div style="left:1283px;top:335px;width:1px;height:144px;background:#c0c0c0"></div>
<div style="left:1321px;top:335px;width:1px;height:144px;background:#c0c0c0"></div>
<div class="dith" style="left:1345px;top:317px;width:16px;height:359px;"></div>
<div class="rs" style="left:1345px;top:317px;width:16px;height:16px;"></div>
<svg style="left:1349px;top:323px" width="7" height="4"><polygon points="0,4 7,4 3.5,0" fill="#000"/></svg>
<div class="rs" style="left:1345px;top:660px;width:16px;height:16px;"></div>
<svg style="left:1349px;top:666px" width="7" height="4"><polygon points="0,0 7,0 3.5,4" fill="#000"/></svg>
<div class="rs" style="left:1345px;top:490px;width:16px;height:16px;"></div>
<div class="r" style="left:1329px;top:677px;width:16px;height:16px;"></div>
<svg style="left:1335px;top:681px" width="4" height="7"><polygon points="0,0 0,7 4,3.5" fill="#000"/></svg>
<div class="f" style="left:1345px;top:677px;width:16px;height:16px;"></div>
<div style="left:1150px;top:695px;width:1210px;height:31px;background:#0000ff;width:210px"></div>
<div class="r" style="left:1170px;top:700px;width:83px;height:23px;"></div>
<span class="t" style="left:1201px;top:706px;letter-spacing:0.16px;">Grabar</span>
<svg style="left:1178px;top:703px" width="18" height="16"><path d="M1.2 9.3l4.5 4.5L16.2 2" fill="none" stroke="#003800" stroke-width="3.6"/><path d="M.8 8.7l4.5 4.5L15.6 1.5" fill="none" stroke="#10a028" stroke-width="3"/><path d="M.5 7.8l4.6 3.8L14.8.8" fill="none" stroke="#58f060" stroke-width=".9"/></svg>
<div class="r" style="left:1264px;top:699px;width:91px;height:24px;"></div>
<span class="t" style="left:1296px;top:706px;letter-spacing:0.18px;">Cancelar</span>
<svg style="left:1276px;top:705px" width="14" height="15"><path d="M2.5 2.5l8.5 10M11.5 2.5L2.5 12.5" stroke="#9c0000" stroke-width="3.6" stroke-linecap="round"/></svg>
<div style="left:1px;top:731px;width:1364px;height:3px;background:#fff"></div>
<div style="left:3px;top:734px;width:1360px;height:15px;background:#008080"></div>
<div style="left:1px;top:749px;width:1364px;height:2px;background:#d8ffff"></div>
<div style="left:1px;top:751px;width:1364px;height:1px;background:#808080"></div>
<div class="s1" style="left:2px;top:754px;width:189px;height:14px;"></div>
<span class="t tah" style="left:4px;top:755px;letter-spacing:0.13px;">[I000] 10.5.1.2  [Local:\\tsclient\C]</span>
<div class="s1" style="left:193px;top:754px;width:52px;height:14px;"></div>
<span class="t tah" style="left:195px;top:755px;letter-spacing:0.15px;">19/10/14</span>
<div class="s1" style="left:246px;top:754px;width:147px;height:14px;"></div>
<span class="t tah" style="left:248px;top:755px;letter-spacing:-0.18px;">ADMINISTRA:N/A.000 (009)</span>
<div class="s1" style="left:394px;top:754px;width:46px;height:14px;"></div>
<span class="t tah" style="left:396px;top:755px;letter-spacing:-0.42px;">NIVEL:9</span>
<div class="s1" style="left:441px;top:754px;width:18px;height:14px;"></div>
<span class="t tah" style="left:443px;top:755px;letter-spacing:-1.34px;">ES</span>
<div class="s1" style="left:460px;top:754px;width:181px;height:14px;"></div>
<span class="t tah" style="left:462px;top:755px;letter-spacing:-0.11px;">[DB:01.C]  ** F02 GESTFRUT  **</span>
<div class="s1" style="left:644px;top:754px;width:159px;height:14px;"></div>
<span class="t tah" style="left:646px;top:755px;letter-spacing:-0.54px;">[C] CONSORFRUT (VALENCIA)</span>
<div class="s1" style="left:805px;top:754px;width:28px;height:14px;"></div>
<span class="t tah" style="left:807px;top:755px;letter-spacing:-0.37px;">2014</span>
<div class="s1" style="left:834px;top:754px;width:40px;height:14px;"></div>
<span class="t tah" style="left:836px;top:755px;">Fax: 2</span>
<div class="s1" style="left:875px;top:754px;width:489px;height:14px;"></div>
<span class="t tah" style="left:877px;top:755px;letter-spacing:-0.25px;">IMP.PREDEFINIDA 0: Universal Printer</span>
<div style="left:181px;top:23px;width:1005px;height:722px;background:#d4d0c8;box-shadow:inset 1px 1px #d4d0c8,inset -1px -1px #404040,inset 2px 2px #fff,inset -2px -2px #808080"></div>
<div style="left:184px;top:25px;width:999px;height:18px;background:#0a246a"></div>
<span class="t tah b w" style="left:185px;top:27px;">Edición de registro en CARGAS: LiNEAS</span>
<div style="left:184px;top:44px;width:999px;height:1px;background:#fff"></div>
<div class="r" style="left:1165px;top:27px;width:16px;height:14px;"></div>
<svg style="left:1165px;top:27px" width="16" height="14"><path d="M4 3l7 7M11 3l-7 7" stroke="#000" stroke-width="1.6"/></svg>
<div style="left:184px;top:78px;width:999px;height:1px;background:#808080"></div>
<div style="left:184px;top:79px;width:999px;height:1px;background:#fff"></div>
<div style="left:185px;top:45px;width:103px;height:33px;background:#808080"></div>
<div class="r" style="left:191px;top:50px;width:90px;height:24px;"></div>
<svg style="left:205px;top:56px" width="18" height="16"><path d="M1.2 9.3l4.5 4.5L16.2 2" fill="none" stroke="#003800" stroke-width="3.6"/><path d="M.8 8.7l4.5 4.5L15.6 1.5" fill="none" stroke="#10a028" stroke-width="3"/><path d="M.5 7.8l4.6 3.8L14.8.8" fill="none" stroke="#58f060" stroke-width=".9"/></svg>
<span class="t" style="left:226px;top:57px;letter-spacing:0.16px;">Aceptar</span>
<div class="r1" style="left:1072px;top:45px;width:111px;height:33px;"></div>
<div class="r" style="left:1079px;top:50px;width:97px;height:24px;"></div>
<svg style="left:1093px;top:54px" width="18" height="16"><path d="M1.5 7.5q3 2 4.5 6.5Q9 6 16 1" fill="none" stroke="#108010" stroke-width="2.2"/><path d="M1.2 7q3 2 4.5 6Q9 5.5 15.5 .8" fill="none" stroke="#30f030" stroke-width="1.3"/></svg>
<span class="t" style="left:1114px;top:57px;letter-spacing:0.26px;">Ordenar</span>
<div class="s" style="left:959px;top:56px;width:13px;height:13px;background:#fff;"></div>
<span class="t" style="left:977px;top:56px;letter-spacing:0.25px;">Agrupar</span>
<div class="g" style="left:184px;top:84px;width:998px;height:215px;"></div>
<div class="f" style="left:190px;top:78px;width:100px;height:14px;"></div>
<span class="t" style="left:192px;top:80px;letter-spacing:0.25px;">Orden de CARGA</span>
<div style="left:208px;top:94px;width:972px;height:203px;background:#fff;box-shadow:inset 1px 1px #808080,inset 2px 2px #404040,inset -1px -1px #fff,inset -2px -2px #d4d0c8"></div>
<div style="left:210px;top:96px;width:940px;height:18px;background:#000"></div>
<div class="hc" style="left:211px;top:96px;width:37px;height:17px;overflow:hidden">
<span class="t w" style="left:1px;top:2px;letter-spacing:0.41px;">CAR.</span>
</div>
<div class="hc" style="left:249px;top:96px;width:60px;height:17px;overflow:hidden">
<span class="t w" style="left:1px;top:2px;letter-spacing:0.22px;">Prov.</span>
</div>
<div class="hc" style="left:310px;top:96px;width:185px;height:17px;overflow:hidden">
<span class="t w" style="left:1px;top:2px;letter-spacing:0.23px;">Almacén Carga</span>
</div>
<div class="hc" style="left:496px;top:96px;width:202px;height:17px;overflow:hidden">
<span class="t w" style="left:1px;top:2px;letter-spacing:0.12px;">Población</span>
</div>
<div class="hc" style="left:699px;top:96px;width:56px;height:17px;overflow:hidden">
<span class="t w" style="left:1px;top:2px;letter-spacing:0.13px;">Palets</span>
</div>
<div class="hc" style="left:756px;top:96px;width:222px;height:17px;overflow:hidden">
<span class="t w" style="left:1px;top:2px;letter-spacing:0.13px;">Producto</span>
</div>
<div class="hc" style="left:979px;top:96px;width:65px;height:17px;overflow:hidden">
<span class="t w" style="left:1px;top:2px;letter-spacing:0.19px;">Fec.Carga</span>
</div>
<div class="hc" style="left:1045px;top:96px;width:44px;height:17px;overflow:hidden">
<span class="t w" style="left:1px;top:2px;letter-spacing:0.18px;">Hora</span>
</div>
<div class="hc" style="left:1090px;top:96px;width:59px;height:17px;overflow:hidden">
<span class="t w" style="left:1px;top:2px;letter-spacing:0.52px;">Km.</span>
</div>
<div style="left:210px;top:114px;width:939px;height:17px;background:#0a246a"></div>
<div style="left:210px;top:131px;width:940px;height:1px;background:#c0c0c0"></div>
<div style="left:211px;top:114px;width:37px;height:17px;overflow:hidden">
<span class="t w" style="left:2px;top:3px;">001</span>
</div>
<div style="left:249px;top:114px;width:60px;height:17px;overflow:hidden">
<span class="t w" style="left:2px;top:3px;letter-spacing:0.37px;">CAMIN</span>
</div>
<div style="left:310px;top:114px;width:185px;height:17px;overflow:hidden">
<span class="t w" style="left:2px;top:3px;letter-spacing:0.31px;">CRTA. DE HURCHILLO, N.º1</span>
</div>
<div style="left:496px;top:114px;width:202px;height:17px;overflow:hidden">
<span class="t w" style="left:2px;top:3px;letter-spacing:0.32px;">ORIHUELA</span>
</div>
<span class="t w b" style="right:613.76px;top:117px;letter-spacing:0.24px;">16.00</span>
<div style="left:756px;top:114px;width:222px;height:17px;overflow:hidden">
<span class="t w" style="left:2px;top:3px;letter-spacing:0.23px;">NAR. NAVEL LANE-LATE</span>
</div>
<div style="left:979px;top:114px;width:65px;height:17px;overflow:hidden">
<span class="t w" style="left:2px;top:3px;letter-spacing:0.32px;">03/04/14</span>
</div>
<span class="t w" style="right:220px;top:117px;">665</span>
<div style="left:210px;top:132px;width:38px;height:17px;background:#d4d0c8"></div>
<div style="left:249px;top:132px;width:60px;height:17px;background:#ffffe1"></div>
<div style="left:210px;top:149px;width:940px;height:1px;background:#c0c0c0"></div>
<div style="left:211px;top:132px;width:37px;height:17px;overflow:hidden">
<span class="t" style="left:2px;top:3px;">002</span>
</div>
<div style="left:249px;top:132px;width:60px;height:17px;overflow:hidden">
<span class="t" style="left:2px;top:3px;letter-spacing:0.37px;">CAMIN</span>
</div>
<div style="left:310px;top:132px;width:185px;height:17px;overflow:hidden">
<span class="t" style="left:2px;top:3px;letter-spacing:0.31px;">CRTA. DE HURCHILLO, N.º1</span>
</div>
<div style="left:496px;top:132px;width:202px;height:17px;overflow:hidden">
<span class="t" style="left:2px;top:3px;letter-spacing:0.32px;">ORIHUELA</span>
</div>
<span class="t b" style="right:613.79px;top:135px;letter-spacing:0.21px;">4.00</span>
<div style="left:756px;top:132px;width:222px;height:17px;overflow:hidden">
<span class="t" style="left:2px;top:3px;letter-spacing:0.23px;">NAR. NAVEL LANE-LATE</span>
</div>
<div style="left:979px;top:132px;width:65px;height:17px;overflow:hidden">
<span class="t" style="left:2px;top:3px;letter-spacing:0.32px;">03/04/14</span>
</div>
<span class="t" style="right:220px;top:135px;">665</span>
<div style="left:210px;top:150px;width:38px;height:17px;background:#d4d0c8"></div>
<div style="left:249px;top:150px;width:60px;height:17px;background:#ffffe1"></div>
<div style="left:210px;top:167px;width:940px;height:1px;background:#c0c0c0"></div>
<div style="left:211px;top:150px;width:37px;height:17px;overflow:hidden">
<span class="t" style="left:2px;top:3px;">003</span>
</div>
<div style="left:249px;top:150px;width:60px;height:17px;overflow:hidden">
<span class="t" style="left:2px;top:3px;letter-spacing:0.37px;">CAMIN</span>
</div>
<div style="left:310px;top:150px;width:185px;height:17px;overflow:hidden">
<span class="t" style="left:2px;top:3px;letter-spacing:0.31px;">CRTA. DE HURCHILLO, N.º1</span>
</div>
<div style="left:496px;top:150px;width:202px;height:17px;overflow:hidden">
<span class="t" style="left:2px;top:3px;letter-spacing:0.32px;">ORIHUELA</span>
</div>
<span class="t b" style="right:613.79px;top:153px;letter-spacing:0.21px;">1.00</span>
<div style="left:756px;top:150px;width:222px;height:17px;overflow:hidden">
<span class="t" style="left:2px;top:3px;letter-spacing:0.23px;">NAR. NAVEL LANE-LATE</span>
</div>
<div style="left:979px;top:150px;width:65px;height:17px;overflow:hidden">
<span class="t" style="left:2px;top:3px;letter-spacing:0.32px;">03/04/14</span>
</div>
<span class="t" style="right:220px;top:153px;">665</span>
<div style="left:210px;top:168px;width:38px;height:17px;background:#d4d0c8"></div>
<div style="left:249px;top:168px;width:60px;height:17px;background:#ffffe1"></div>
<div style="left:210px;top:185px;width:940px;height:1px;background:#c0c0c0"></div>
<div style="left:211px;top:168px;width:37px;height:17px;overflow:hidden">
<span class="t" style="left:2px;top:3px;">004</span>
</div>
<div style="left:249px;top:168px;width:60px;height:17px;overflow:hidden">
<span class="t" style="left:2px;top:3px;letter-spacing:0.68px;">JOBAR</span>
</div>
<div style="left:310px;top:168px;width:185px;height:17px;overflow:hidden">
<span class="t" style="left:2px;top:3px;letter-spacing:0.63px;">C/ SAN JOSÉ, S/N</span>
</div>
<div style="left:496px;top:168px;width:202px;height:17px;overflow:hidden">
<span class="t" style="left:2px;top:3px;letter-spacing:0.29px;">LA POBLA DEL DUC</span>
</div>
<span class="t b" style="right:613.76px;top:171px;letter-spacing:0.24px;">16.00</span>
<div style="left:756px;top:168px;width:222px;height:17px;overflow:hidden">
<span class="t" style="left:2px;top:3px;letter-spacing:0.30px;">NADORCOTT</span>
</div>
<div style="left:979px;top:168px;width:65px;height:17px;overflow:hidden">
<span class="t" style="left:2px;top:3px;letter-spacing:0.32px;">02/04/14</span>
</div>
<span class="t" style="right:220px;top:171px;">515</span>
<div style="left:210px;top:186px;width:38px;height:17px;background:#d4d0c8"></div>
<div style="left:249px;top:186px;width:60px;height:17px;background:#ffffe1"></div>
<div style="left:210px;top:203px;width:940px;height:1px;background:#c0c0c0"></div>
<div style="left:211px;top:186px;width:37px;height:17px;overflow:hidden">
<span class="t" style="left:2px;top:3px;">005</span>
</div>
<div style="left:249px;top:186px;width:60px;height:17px;overflow:hidden">
<span class="t" style="left:2px;top:3px;letter-spacing:0.05px;">BLANF</span>
</div>
<div style="left:310px;top:186px;width:185px;height:17px;overflow:hidden">
<span class="t" style="left:2px;top:3px;letter-spacing:0.41px;">AVDA.MEDITERRANEO, S/N</span>
</div>
<div style="left:496px;top:186px;width:202px;height:17px;overflow:hidden">
<span class="t" style="left:2px;top:3px;letter-spacing:0.25px;">SEGORBE</span>
</div>
<span class="t b" style="right:613.76px;top:189px;letter-spacing:0.24px;">12.00</span>
<div style="left:756px;top:186px;width:222px;height:17px;overflow:hidden">
<span class="t" style="left:2px;top:3px;letter-spacing:0.35px;">MANDARINA</span>
</div>
<div style="left:979px;top:186px;width:65px;height:17px;overflow:hidden">
<span class="t" style="left:2px;top:3px;letter-spacing:0.32px;">01/04/14</span>
</div>
<span class="t" style="right:220px;top:189px;">450</span>
<div style="left:210px;top:204px;width:38px;height:17px;background:#d4d0c8"></div>
<div style="left:249px;top:204px;width:60px;height:17px;background:#ffffe1"></div>
<div style="left:210px;top:221px;width:940px;height:1px;background:#c0c0c0"></div>
<div style="left:211px;top:204px;width:37px;height:17px;overflow:hidden">
<span class="t" style="left:2px;top:3px;">006</span>
</div>
<div style="left:249px;top:204px;width:60px;height:17px;overflow:hidden">
<span class="t" style="left:2px;top:3px;letter-spacing:0.89px;">CITRI</span>
</div>
<div style="left:310px;top:204px;width:185px;height:17px;overflow:hidden">
<span class="t" style="left:2px;top:3px;letter-spacing:0.39px;">CAMINO SEGORBE S/N</span>
</div>
<div style="left:496px;top:204px;width:202px;height:17px;overflow:hidden">
<span class="t" style="left:2px;top:3px;letter-spacing:0.30px;">LA LLOSA</span>
</div>
<span class="t b" style="right:613.79px;top:207px;letter-spacing:0.21px;">5.00</span>
<div style="left:756px;top:204px;width:222px;height:17px;overflow:hidden">
<span class="t" style="left:2px;top:3px;letter-spacing:0.30px;">NADORCOTT</span>
</div>
<div style="left:979px;top:204px;width:65px;height:17px;overflow:hidden">
<span class="t" style="left:2px;top:3px;letter-spacing:0.32px;">02/04/14</span>
</div>
<span class="t" style="right:220px;top:207px;">402</span>
<div style="left:210px;top:222px;width:38px;height:17px;background:#d4d0c8"></div>
<div style="left:249px;top:222px;width:60px;height:17px;background:#ffffe1"></div>
<div style="left:210px;top:239px;width:940px;height:1px;background:#c0c0c0"></div>
<div style="left:211px;top:222px;width:37px;height:17px;overflow:hidden">
<span class="t" style="left:2px;top:3px;">007</span>
</div>
<div style="left:249px;top:222px;width:60px;height:17px;overflow:hidden">
<span class="t" style="left:2px;top:3px;letter-spacing:0.41px;">BITEM</span>
</div>
<div style="left:310px;top:222px;width:185px;height:17px;overflow:hidden">
<span class="t" style="left:2px;top:3px;letter-spacing:0.36px;">CTRA. TORTOSA-BENIFALLET KM</span>
</div>
<div style="left:496px;top:222px;width:202px;height:17px;overflow:hidden">
<span class="t" style="left:2px;top:3px;letter-spacing:0.44px;">TORTOSA</span>
</div>
<span class="t b" style="right:613.76px;top:225px;letter-spacing:0.24px;">10.00</span>
<div style="left:756px;top:222px;width:222px;height:17px;overflow:hidden">
<span class="t" style="left:2px;top:3px;letter-spacing:0.30px;">NADORCOTT</span>
</div>
<div style="left:979px;top:222px;width:65px;height:17px;overflow:hidden">
<span class="t" style="left:2px;top:3px;letter-spacing:0.32px;">02/04/14</span>
</div>
<span class="t" style="right:220px;top:225px;">0</span>
<div style="left:210px;top:240px;width:38px;height:17px;background:#d4d0c8"></div>
<div style="left:249px;top:240px;width:60px;height:17px;background:#ffffe1"></div>
<div style="left:210px;top:257px;width:940px;height:1px;background:#c0c0c0"></div>
<div style="left:211px;top:240px;width:37px;height:17px;overflow:hidden">
<span class="t" style="left:2px;top:3px;">008</span>
</div>
<div style="left:249px;top:240px;width:60px;height:17px;overflow:hidden">
<span class="t" style="left:2px;top:3px;letter-spacing:0.49px;">CHOIC</span>
</div>
<div style="left:310px;top:240px;width:185px;height:17px;overflow:hidden">
<span class="t" style="left:2px;top:3px;letter-spacing:0.43px;">WESTERJORK 95</span>
</div>
<div style="left:496px;top:240px;width:202px;height:17px;overflow:hidden">
<span class="t" style="left:2px;top:3px;letter-spacing:0.81px;">JORK</span>
</div>
<span class="t b" style="right:613.79px;top:243px;letter-spacing:0.21px;">5.00</span>
<div style="left:756px;top:240px;width:222px;height:17px;overflow:hidden">
<span class="t" style="left:2px;top:3px;letter-spacing:0.20px;">NAR. NAVEL POWELL</span>
</div>
<div style="left:979px;top:240px;width:65px;height:17px;overflow:hidden">
<span class="t" style="left:2px;top:3px;letter-spacing:0.32px;">25/09/14</span>
</div>
<div style="left:1045px;top:240px;width:44px;height:17px;overflow:hidden">
<span class="t" style="left:2px;top:3px;letter-spacing:0.26px;">11:18</span>
</div>
<span class="t" style="right:220px;top:243px;">0</span>
<div style="left:248px;top:114px;width:1px;height:144px;background:#c0c0c0"></div>
<div style="left:309px;top:114px;width:1px;height:144px;background:#c0c0c0"></div>
<div style="left:495px;top:114px;width:1px;height:144px;background:#c0c0c0"></div>
<div style="left:698px;top:114px;width:1px;height:144px;background:#c0c0c0"></div>
<div style="left:755px;top:114px;width:1px;height:144px;background:#c0c0c0"></div>
<div style="left:978px;top:114px;width:1px;height:144px;background:#c0c0c0"></div>
<div style="left:1044px;top:114px;width:1px;height:144px;background:#c0c0c0"></div>
<div style="left:1089px;top:114px;width:1px;height:144px;background:#c0c0c0"></div>
<div style="left:1149px;top:114px;width:1px;height:144px;background:#c0c0c0"></div>
<div style="left:248px;top:114px;width:1px;height:17px;background:#c0d0ff"></div>
<div class="dith" style="left:1163px;top:96px;width:16px;height:199px;"></div>
<div class="rs" style="left:1163px;top:96px;width:16px;height:16px;"></div>
<svg style="left:1167px;top:102px" width="7" height="4"><polygon points="0,4 7,4 3.5,0" fill="#000"/></svg>
<div class="rs" style="left:1163px;top:279px;width:16px;height:16px;"></div>
<svg style="left:1167px;top:285px" width="7" height="4"><polygon points="0,0 7,0 3.5,4" fill="#000"/></svg>
<div class="rs" style="left:1163px;top:112px;width:16px;height:16px;"></div>
<div class="r1" style="left:187px;top:96px;width:21px;height:201px;"></div>
<div class="r" style="left:188px;top:97px;width:20px;height:92px;"></div>
<div class="r" style="left:188px;top:189px;width:20px;height:89px;"></div>
<svg style="left:193px;top:136px" width="9" height="16"><path d="M4.5 0L9 9H6V16H3V9H0z" fill="#800000"/></svg>
<svg style="left:193px;top:226px" width="9" height="16"><path d="M4.5 16L9 7H6V0H3V7H0z" fill="#800000"/></svg>
<div class="g" style="left:184px;top:304px;width:998px;height:214px;"></div>
<div class="f" style="left:190px;top:298px;width:124px;height:14px;"></div>
<span class="t" style="left:192px;top:300px;letter-spacing:0.30px;">Orden de DESCARGA</span>
<div style="left:208px;top:314px;width:972px;height:203px;background:#fff;box-shadow:inset 1px 1px #808080,inset 2px 2px #404040,inset -1px -1px #fff,inset -2px -2px #d4d0c8"></div>
<div style="left:210px;top:316px;width:940px;height:18px;background:#000"></div>
<div class="hb" style="left:211px;top:316px;width:37px;height:17px;overflow:hidden">
<span class="t w" style="left:1px;top:2px;letter-spacing:0.53px;">DES</span>
</div>
<div class="hb" style="left:249px;top:316px;width:60px;height:17px;overflow:hidden">
<span class="t w" style="left:1px;top:2px;letter-spacing:0.06px;">Cliente</span>
</div>
<div class="hb" style="left:310px;top:316px;width:185px;height:17px;overflow:hidden">
<span class="t w" style="left:1px;top:2px;letter-spacing:0.23px;">Almacén Descarga</span>
</div>
<div class="hb" style="left:496px;top:316px;width:202px;height:17px;overflow:hidden">
<span class="t w" style="left:1px;top:2px;letter-spacing:0.12px;">Población</span>
</div>
<div class="hb" style="left:699px;top:316px;width:56px;height:17px;overflow:hidden">
<span class="t w" style="left:1px;top:2px;letter-spacing:0.13px;">Palets</span>
</div>
<div class="hb" style="left:756px;top:316px;width:222px;height:17px;overflow:hidden">
<span class="t w" style="left:1px;top:2px;letter-spacing:0.13px;">Producto</span>
</div>
<div class="hb" style="left:979px;top:316px;width:65px;height:17px;overflow:hidden">
<span class="t w" style="left:1px;top:2px;letter-spacing:0.20px;">Fec.Descarga</span>
</div>
<div class="hb" style="left:1045px;top:316px;width:44px;height:17px;overflow:hidden">
<span class="t w" style="left:1px;top:2px;letter-spacing:0.18px;">Hora</span>
</div>
<div class="hb" style="left:1090px;top:316px;width:59px;height:17px;overflow:hidden">
<span class="t w" style="left:1px;top:2px;letter-spacing:0.52px;">Km.</span>
</div>
<div style="left:210px;top:334px;width:939px;height:17px;background:#0a246a"></div>
<div style="left:210px;top:351px;width:940px;height:1px;background:#c0c0c0"></div>
<div style="left:211px;top:334px;width:37px;height:17px;overflow:hidden">
<span class="t w" style="left:2px;top:3px;">001</span>
</div>
<div style="left:249px;top:334px;width:60px;height:17px;overflow:hidden">
<span class="t w" style="left:2px;top:3px;letter-spacing:0.20px;">EFES</span>
</div>
<div style="left:310px;top:334px;width:185px;height:17px;overflow:hidden">
<span class="t w" style="left:2px;top:3px;letter-spacing:0.35px;">STREET K TREBONICUM</span>
</div>
<div style="left:496px;top:334px;width:202px;height:17px;overflow:hidden">
<span class="t w" style="left:2px;top:3px;letter-spacing:0.40px;">PRAHA 5 (EXIT 21)</span>
</div>
<span class="t w b" style="right:613.76px;top:337px;letter-spacing:0.24px;">12.00</span>
<div style="left:756px;top:334px;width:222px;height:17px;overflow:hidden">
<span class="t w" style="left:2px;top:3px;letter-spacing:0.16px;">MAND.</span>
</div>
<div style="left:979px;top:334px;width:65px;height:17px;overflow:hidden">
<span class="t w" style="left:2px;top:3px;letter-spacing:0.32px;">04/04/14</span>
</div>
<span class="t w" style="right:220px;top:337px;">0</span>
<div style="left:210px;top:352px;width:38px;height:17px;background:#d4d0c8"></div>
<div style="left:249px;top:352px;width:60px;height:17px;background:#ffffe1"></div>
<div style="left:210px;top:369px;width:940px;height:1px;background:#c0c0c0"></div>
<div style="left:211px;top:352px;width:37px;height:17px;overflow:hidden">
<span class="t" style="left:2px;top:3px;">002</span>
</div>
<div style="left:249px;top:352px;width:60px;height:17px;overflow:hidden">
<span class="t" style="left:2px;top:3px;letter-spacing:0.14px;">MERCA</span>
</div>
<div style="left:310px;top:352px;width:185px;height:17px;overflow:hidden">
<span class="t" style="left:2px;top:3px;letter-spacing:0.47px;">HLADILNISKA 38</span>
</div>
<div style="left:496px;top:352px;width:202px;height:17px;overflow:hidden">
<span class="t" style="left:2px;top:3px;letter-spacing:0.40px;">LJUBLJANA-ZALOG</span>
</div>
<span class="t b" style="right:613.79px;top:355px;letter-spacing:0.21px;">5.00</span>
<div style="left:756px;top:352px;width:222px;height:17px;overflow:hidden">
<span class="t" style="left:2px;top:3px;letter-spacing:0.27px;">MAND. NADORCOTT</span>
</div>
<div style="left:979px;top:352px;width:65px;height:17px;overflow:hidden">
<span class="t" style="left:2px;top:3px;letter-spacing:0.32px;">05/04/14</span>
</div>
<span class="t" style="right:220px;top:355px;">0</span>
<div style="left:210px;top:370px;width:38px;height:17px;background:#d4d0c8"></div>
<div style="left:249px;top:370px;width:60px;height:17px;background:#ffffe1"></div>
<div style="left:210px;top:387px;width:940px;height:1px;background:#c0c0c0"></div>
<div style="left:211px;top:370px;width:37px;height:17px;overflow:hidden">
<span class="t" style="left:2px;top:3px;">003</span>
</div>
<div style="left:249px;top:370px;width:60px;height:17px;overflow:hidden">
<span class="t" style="left:2px;top:3px;letter-spacing:0.14px;">MERCA</span>
</div>
<div style="left:310px;top:370px;width:185px;height:17px;overflow:hidden">
<span class="t" style="left:2px;top:3px;letter-spacing:0.47px;">HLADILNISKA 38</span>
</div>
<div style="left:496px;top:370px;width:202px;height:17px;overflow:hidden">
<span class="t" style="left:2px;top:3px;letter-spacing:0.40px;">LJUBLJANA-ZALOG</span>
</div>
<span class="t b" style="right:613.76px;top:373px;letter-spacing:0.24px;">16.00</span>
<div style="left:756px;top:370px;width:222px;height:17px;overflow:hidden">
<span class="t" style="left:2px;top:3px;letter-spacing:0.27px;">MAND. NADORCOTT</span>
</div>
<div style="left:979px;top:370px;width:65px;height:17px;overflow:hidden">
<span class="t" style="left:2px;top:3px;letter-spacing:0.32px;">05/04/14</span>
</div>
<span class="t" style="right:220px;top:373px;">0</span>
<div style="left:210px;top:388px;width:38px;height:17px;background:#d4d0c8"></div>
<div style="left:249px;top:388px;width:60px;height:17px;background:#ffffe1"></div>
<div style="left:210px;top:405px;width:940px;height:1px;background:#c0c0c0"></div>
<div style="left:211px;top:388px;width:37px;height:17px;overflow:hidden">
<span class="t" style="left:2px;top:3px;">004</span>
</div>
<div style="left:249px;top:388px;width:60px;height:17px;overflow:hidden">
<span class="t" style="left:2px;top:3px;letter-spacing:0.14px;">MERCA</span>
</div>
<div style="left:310px;top:388px;width:185px;height:17px;overflow:hidden">
<span class="t" style="left:2px;top:3px;letter-spacing:0.47px;">HLADILNISKA 38</span>
</div>
<div style="left:496px;top:388px;width:202px;height:17px;overflow:hidden">
<span class="t" style="left:2px;top:3px;letter-spacing:0.40px;">LJUBLJANA-ZALOG</span>
</div>
<span class="t b" style="right:613.76px;top:391px;letter-spacing:0.24px;">10.00</span>
<div style="left:756px;top:388px;width:222px;height:17px;overflow:hidden">
<span class="t" style="left:2px;top:3px;letter-spacing:0.27px;">MAND. NADORCOTT</span>
</div>
<div style="left:979px;top:388px;width:65px;height:17px;overflow:hidden">
<span class="t" style="left:2px;top:3px;letter-spacing:0.32px;">05/04/14</span>
</div>
<span class="t" style="right:220px;top:391px;">0</span>
<div style="left:210px;top:406px;width:38px;height:17px;background:#d4d0c8"></div>
<div style="left:249px;top:406px;width:60px;height:17px;background:#ffffe1"></div>
<div style="left:210px;top:423px;width:940px;height:1px;background:#c0c0c0"></div>
<div style="left:211px;top:406px;width:37px;height:17px;overflow:hidden">
<span class="t" style="left:2px;top:3px;">005</span>
</div>
<div style="left:249px;top:406px;width:60px;height:17px;overflow:hidden">
<span class="t" style="left:2px;top:3px;letter-spacing:0.41px;">PRIME</span>
</div>
<div style="left:310px;top:406px;width:185px;height:17px;overflow:hidden">
<span class="t" style="left:2px;top:3px;letter-spacing:0.37px;">10/F BANGKOK BANK BUILDING</span>
</div>
<div style="left:496px;top:406px;width:202px;height:17px;overflow:hidden">
<span class="t" style="left:2px;top:3px;letter-spacing:0.22px;">490-492 NATHAN ROAD</span>
</div>
<span class="t b" style="right:613.76px;top:409px;letter-spacing:0.24px;">16.00</span>
<div style="left:756px;top:406px;width:222px;height:17px;overflow:hidden">
<span class="t" style="left:2px;top:3px;letter-spacing:0.24px;">ORAN. NAVEL LANE-LATE</span>
</div>
<div style="left:979px;top:406px;width:65px;height:17px;overflow:hidden">
<span class="t" style="left:2px;top:3px;letter-spacing:0.32px;">06/05/14</span>
</div>
<span class="t" style="right:220px;top:409px;">0</span>
<div style="left:210px;top:424px;width:38px;height:17px;background:#d4d0c8"></div>
<div style="left:249px;top:424px;width:60px;height:17px;background:#ffffe1"></div>
<div style="left:210px;top:441px;width:940px;height:1px;background:#c0c0c0"></div>
<div style="left:211px;top:424px;width:37px;height:17px;overflow:hidden">
<span class="t" style="left:2px;top:3px;">006</span>
</div>
<div style="left:249px;top:424px;width:60px;height:17px;overflow:hidden">
<span class="t" style="left:2px;top:3px;letter-spacing:0.41px;">PRIME</span>
</div>
<div style="left:310px;top:424px;width:185px;height:17px;overflow:hidden">
<span class="t" style="left:2px;top:3px;letter-spacing:0.37px;">10/F BANGKOK BANK BUILDING</span>
</div>
<div style="left:496px;top:424px;width:202px;height:17px;overflow:hidden">
<span class="t" style="left:2px;top:3px;letter-spacing:0.22px;">490-492 NATHAN ROAD</span>
</div>
<span class="t b" style="right:613.79px;top:427px;letter-spacing:0.21px;">4.00</span>
<div style="left:756px;top:424px;width:222px;height:17px;overflow:hidden">
<span class="t" style="left:2px;top:3px;letter-spacing:0.24px;">ORAN. NAVEL LANE-LATE</span>
</div>
<div style="left:979px;top:424px;width:65px;height:17px;overflow:hidden">
<span class="t" style="left:2px;top:3px;letter-spacing:0.32px;">06/05/14</span>
</div>
<span class="t" style="right:220px;top:427px;">0</span>
<div style="left:210px;top:442px;width:38px;height:17px;background:#d4d0c8"></div>
<div style="left:249px;top:442px;width:60px;height:17px;background:#ffffe1"></div>
<div style="left:210px;top:459px;width:940px;height:1px;background:#c0c0c0"></div>
<div style="left:211px;top:442px;width:37px;height:17px;overflow:hidden">
<span class="t" style="left:2px;top:3px;">007</span>
</div>
<div style="left:249px;top:442px;width:60px;height:17px;overflow:hidden">
<span class="t" style="left:2px;top:3px;letter-spacing:0.41px;">PRIME</span>
</div>
<div style="left:310px;top:442px;width:185px;height:17px;overflow:hidden">
<span class="t" style="left:2px;top:3px;letter-spacing:0.37px;">10/F BANGKOK BANK BUILDING</span>
</div>
<div style="left:496px;top:442px;width:202px;height:17px;overflow:hidden">
<span class="t" style="left:2px;top:3px;letter-spacing:0.22px;">490-492 NATHAN ROAD</span>
</div>
<span class="t b" style="right:613.79px;top:445px;letter-spacing:0.21px;">1.00</span>
<div style="left:756px;top:442px;width:222px;height:17px;overflow:hidden">
<span class="t" style="left:2px;top:3px;letter-spacing:0.24px;">ORAN. NAVEL LANE-LATE</span>
</div>
<div style="left:979px;top:442px;width:65px;height:17px;overflow:hidden">
<span class="t" style="left:2px;top:3px;letter-spacing:0.32px;">06/05/14</span>
</div>
<span class="t" style="right:220px;top:445px;">0</span>
<div style="left:210px;top:460px;width:38px;height:17px;background:#d4d0c8"></div>
<div style="left:249px;top:460px;width:60px;height:17px;background:#ffffe1"></div>
<div style="left:210px;top:477px;width:940px;height:1px;background:#c0c0c0"></div>
<div style="left:211px;top:460px;width:37px;height:17px;overflow:hidden">
<span class="t" style="left:2px;top:3px;">008</span>
</div>
<div style="left:249px;top:460px;width:60px;height:17px;overflow:hidden">
<span class="t" style="left:2px;top:3px;letter-spacing:0.18px;">AGAT</span>
</div>
<div style="left:310px;top:460px;width:185px;height:17px;overflow:hidden">
<span class="t" style="left:2px;top:3px;letter-spacing:0.45px;">SOFIYSKAYA STREET 60 STORE</span>
</div>
<div style="left:496px;top:460px;width:202px;height:17px;overflow:hidden">
<span class="t" style="left:2px;top:3px;letter-spacing:0.30px;">SAN PETERSBURGO</span>
</div>
<span class="t b" style="right:613.79px;top:463px;letter-spacing:0.21px;">5.00</span>
<div style="left:756px;top:460px;width:222px;height:17px;overflow:hidden">
<span class="t" style="left:2px;top:3px;letter-spacing:0.21px;">ORAN. NAVEL POWELL</span>
</div>
<div style="left:979px;top:460px;width:65px;height:17px;overflow:hidden">
<span class="t" style="left:2px;top:3px;letter-spacing:0.32px;">28/09/14</span>
</div>
<span class="t" style="right:220px;top:463px;">0</span>
<div style="left:248px;top:334px;width:1px;height:144px;background:#c0c0c0"></div>
<div style="left:309px;top:334px;width:1px;height:144px;background:#c0c0c0"></div>
<div style="left:495px;top:334px;width:1px;height:144px;background:#c0c0c0"></div>
<div style="left:698px;top:334px;width:1px;height:144px;background:#c0c0c0"></div>
<div style="left:755px;top:334px;width:1px;height:144px;background:#c0c0c0"></div>
<div style="left:978px;top:334px;width:1px;height:144px;background:#c0c0c0"></div>
<div style="left:1044px;top:334px;width:1px;height:144px;background:#c0c0c0"></div>
<div style="left:1089px;top:334px;width:1px;height:144px;background:#c0c0c0"></div>
<div style="left:1149px;top:334px;width:1px;height:144px;background:#c0c0c0"></div>
<div style="left:248px;top:334px;width:1px;height:17px;background:#c0d0ff"></div>
<div class="dith" style="left:1163px;top:316px;width:16px;height:199px;"></div>
<div class="rs" style="left:1163px;top:316px;width:16px;height:16px;"></div>
<svg style="left:1167px;top:322px" width="7" height="4"><polygon points="0,4 7,4 3.5,0" fill="#000"/></svg>
<div class="rs" style="left:1163px;top:499px;width:16px;height:16px;"></div>
<svg style="left:1167px;top:505px" width="7" height="4"><polygon points="0,0 7,0 3.5,4" fill="#000"/></svg>
<div class="rs" style="left:1163px;top:332px;width:16px;height:16px;"></div>
<div class="r1" style="left:187px;top:316px;width:21px;height:201px;"></div>
<div class="r" style="left:188px;top:316px;width:20px;height:85px;"></div>
<div class="r" style="left:188px;top:401px;width:20px;height:89px;"></div>
<svg style="left:193px;top:351px" width="9" height="16"><path d="M4.5 0L9 9H6V16H3V9H0z" fill="#0000c0"/></svg>
<svg style="left:193px;top:438px" width="9" height="16"><path d="M4.5 16L9 7H6V0H3V7H0z" fill="#0000c0"/></svg>
<div class="dith" style="left:185px;top:519px;width:56px;height:20px;box-shadow:inset 1px 1px #808080,inset 2px 2px #404040,inset -1px -1px #fff"></div>
<span class="t" style="left:192px;top:524px;letter-spacing:0.09px;">General</span>
<div style="left:246px;top:520px;width:1px;height:20px;background:#808080"></div>
<div style="left:247px;top:520px;width:1px;height:20px;background:#fff"></div>
<span class="t" style="left:258px;top:523px;letter-spacing:0.05px;">Notas</span>
<div style="left:304px;top:520px;width:1px;height:20px;background:#808080"></div>
<div style="left:305px;top:520px;width:1px;height:20px;background:#fff"></div>
<div class="g" style="left:187px;top:552px;width:992px;height:57px;"></div>
<div class="f" style="left:193px;top:546px;width:67px;height:14px;"></div>
<span class="t" style="left:195px;top:547px;letter-spacing:0.12px;">Datos Flete</span>
<span class="t" style="left:195px;top:563px;letter-spacing:0.15px;">Transportista</span>
<div class="s" style="left:195px;top:578px;width:57px;height:21px;background:#fff;"></div>
<div style="left:198px;top:581px;width:35px;height:13px;background:#0a246a"></div>
<span class="t w" style="left:198px;top:582px;letter-spacing:0.35px;">CLIEN</span>
<svg style="left:259px;top:578px" width="25" height="21" viewBox="0 0 25 25" preserveAspectRatio="none"><rect width="25" height="25" fill="#960096"/><path d="M6.1 3.8L9.9 0M16 8.9l5.8-6.1" stroke="#f4c8f4" stroke-width=".9"/><path d="M6.1 5.2l2.4-1.2 7.5 5.6v2.1l-3.6 3.1-6.3-6.6zM7 12.5l1.5 2 3.2 2.9 6.8-6.2 1.5-.2-.3 2.6-5.7 6.9-3 2-4-1.5-1.4-5zM1 25l.2-6.7 2.6-2.3 1.4 2.3.4 3.7 2.9 3zM13.6 25l5.6-6.7 3.8 3.7v3z" fill="#f4c8f4"/><path d="M6.5 18.3h2M5.8 19.5q1.2 2.5 4.2 3 3-1 7.5-5.3M13 24.5l5.5-6" stroke="#000" fill="none" stroke-width=".9"/><ellipse cx="9.6" cy="23.6" rx="2.2" ry="1.4"/></svg>
<div class="s" style="left:291px;top:578px;width:232px;height:21px;background:#fff;"></div>
<div class="rs" style="left:505px;top:580px;width:16px;height:17px;"></div>
<svg style="left:509px;top:586px" width="7" height="4"><polygon points="0,0 7,0 3.5,4" fill="#000"/></svg>
<span class="t" style="left:295px;top:583px;letter-spacing:0.34px;">CAMION CLIENTE</span>
<span class="t" style="left:531px;top:563px;letter-spacing:0.17px;">Remolque</span>
<div class="s" style="left:531px;top:578px;width:73px;height:21px;background:#fff;"></div>
<span class="t" style="left:611px;top:563px;letter-spacing:0.18px;">Camión</span>
<div class="s" style="left:611px;top:578px;width:73px;height:21px;background:#fff;"></div>
<span class="t" style="left:691px;top:563px;letter-spacing:0.06px;">CMR</span>
<div class="s" style="left:691px;top:578px;width:73px;height:21px;background:#fff;"></div>
<span class="t" style="left:771px;top:563px;letter-spacing:0.27px;">Termógrafo</span>
<div class="s" style="left:771px;top:578px;width:73px;height:21px;background:#fff;"></div>
<span class="t" style="left:851px;top:563px;letter-spacing:0.19px;">Tipo Camión</span>
<div class="s" style="left:851px;top:578px;width:112px;height:21px;background:#fff;"></div>
<div class="rs" style="left:945px;top:580px;width:16px;height:17px;"></div>
<svg style="left:949px;top:586px" width="7" height="4"><polygon points="0,0 7,0 3.5,4" fill="#000"/></svg>
<span class="t" style="left:971px;top:563px;letter-spacing:0.12px;">Conductor</span>
<div class="s" style="left:971px;top:578px;width:113px;height:21px;background:#fff;"></div>
<span class="t" style="left:1091px;top:563px;letter-spacing:0.17px;">Teléfono</span>
<div class="s" style="left:1091px;top:578px;width:81px;height:21px;background:#fff;"></div>
<div class="g" style="left:187px;top:616px;width:992px;height:122px;"></div>
<div class="f" style="left:193px;top:610px;width:43px;height:14px;"></div>
<span class="t" style="left:195px;top:611px;letter-spacing:0.12px;">Detalle</span>
<span class="t" style="left:195px;top:627px;letter-spacing:0.13px;">Tipo de Gasto</span>
<div class="s" style="left:195px;top:642px;width:40px;height:21px;background:#d4d0c8;"></div>
<span class="t" style="left:198px;top:646px;letter-spacing:-0.11px;">F01</span>
<div class="s" style="left:235px;top:642px;width:232px;height:21px;background:#fff;"></div>
<div class="rs" style="left:449px;top:644px;width:16px;height:17px;"></div>
<svg style="left:453px;top:650px" width="7" height="4"><polygon points="0,0 7,0 3.5,4" fill="#000"/></svg>
<span class="t" style="left:239px;top:647px;letter-spacing:0.16px;">FLETES</span>
<span class="t" style="left:475px;top:627px;letter-spacing:0.03px;">Fecha</span>
<div class="s" style="left:475px;top:642px;width:72px;height:21px;background:#fff;"></div>
<span class="t" style="left:478px;top:646px;letter-spacing:0.32px;">16/10/14</span>
<span class="t" style="left:555px;top:627px;letter-spacing:0.36px;">Imp. a repartir</span>
<div class="s" style="left:555px;top:642px;width:115px;height:21px;background:#fff;"></div>
<span class="t" style="right:699.87px;top:646px;letter-spacing:0.13px;">0.00</span>
<span class="t" style="left:675px;top:627px;letter-spacing:0.07px;">Divisa</span>
<div class="s" style="left:675px;top:642px;width:57px;height:21px;background:#fff;"></div>
<div class="rs" style="left:714px;top:644px;width:16px;height:17px;"></div>
<svg style="left:718px;top:650px" width="7" height="4"><polygon points="0,0 7,0 3.5,4" fill="#000"/></svg>
<span class="t" style="left:679px;top:647px;letter-spacing:0.12px;">EUR</span>
<span class="t" style="left:763px;top:627px;letter-spacing:0.34px;">Imp. Fac.Compra</span>
<div class="s" style="left:763px;top:642px;width:115px;height:21px;background:#fff;"></div>
<span class="t" style="right:491.87px;top:646px;letter-spacing:0.13px;">0.00</span>
<span class="t" style="left:883px;top:627px;letter-spacing:0.15px;">Div. Fac.</span>
<div class="s" style="left:883px;top:642px;width:57px;height:21px;background:#fff;"></div>
<div class="rs" style="left:922px;top:644px;width:16px;height:17px;"></div>
<svg style="left:926px;top:650px" width="7" height="4"><polygon points="0,0 7,0 3.5,4" fill="#000"/></svg>
<span class="t" style="left:887px;top:647px;letter-spacing:0.12px;">EUR</span>
<span class="t" style="left:947px;top:627px;letter-spacing:0.14px;">Observaciones</span>
<div class="s" style="left:947px;top:642px;width:217px;height:21px;background:#fff;"></div>
<div class="g" style="left:195px;top:672px;width:184px;height:58px;"></div>
<div class="f" style="left:201px;top:666px;width:49px;height:14px;"></div>
<span class="t" style="left:203px;top:667px;letter-spacing:0.21px;">Cta.Vta.</span>
<span class="t" style="left:203px;top:683px;letter-spacing:0.15px;">Aplicar</span>
<div class="s" style="left:203px;top:698px;width:57px;height:21px;background:#fff;"></div>
<div class="rs" style="left:242px;top:700px;width:16px;height:17px;"></div>
<svg style="left:246px;top:706px" width="7" height="4"><polygon points="0,0 7,0 3.5,4" fill="#000"/></svg>
<span class="t" style="left:207px;top:703px;letter-spacing:1.39px;">SI</span>
<span class="t" style="left:267px;top:683px;letter-spacing:0.23px;">Repartir por</span>
<div class="s" style="left:267px;top:698px;width:104px;height:21px;background:#fff;"></div>
<div class="rs" style="left:353px;top:700px;width:16px;height:17px;"></div>
<svg style="left:357px;top:706px" width="7" height="4"><polygon points="0,0 7,0 3.5,4" fill="#000"/></svg>
<span class="t" style="left:271px;top:703px;letter-spacing:0.75px;">KILOS</span>
<div class="g" style="left:387px;top:672px;width:72px;height:58px;"></div>
<div class="f" style="left:393px;top:666px;width:50px;height:14px;"></div>
<span class="t" style="left:395px;top:667px;letter-spacing:0.34px;">N/Cargo</span>
<span class="t" style="left:395px;top:683px;letter-spacing:0.15px;">Aplicar</span>
<div class="s" style="left:395px;top:698px;width:57px;height:21px;background:#fff;"></div>
<div class="rs" style="left:434px;top:700px;width:16px;height:17px;"></div>
<svg style="left:438px;top:706px" width="7" height="4"><polygon points="0,0 7,0 3.5,4" fill="#000"/></svg>
<span class="t" style="left:399px;top:703px;letter-spacing:1.39px;">SI</span>
<div class="g" style="left:467px;top:672px;width:80px;height:58px;"></div>
<div class="f" style="left:473px;top:666px;width:65px;height:14px;"></div>
<span class="t" style="left:475px;top:667px;letter-spacing:0.07px;">Fac.Cliente</span>
<span class="t" style="left:475px;top:683px;letter-spacing:0.15px;">Aplicar</span>
<div class="s" style="left:475px;top:698px;width:57px;height:21px;background:#fff;"></div>
<div class="rs" style="left:514px;top:700px;width:16px;height:17px;"></div>
<svg style="left:518px;top:706px" width="7" height="4"><polygon points="0,0 7,0 3.5,4" fill="#000"/></svg>
<span class="t" style="left:479px;top:703px;letter-spacing:0.06px;">NO</span>
<div class="g" style="left:555px;top:672px;width:616px;height:58px;"></div>
<div class="f" style="left:561px;top:666px;width:40px;height:14px;"></div>
<span class="t" style="left:563px;top:667px;letter-spacing:0.09px;">Claves</span>
<span class="t" style="left:563px;top:683px;letter-spacing:0.27px;">Carga</span>
<div class="s" style="left:563px;top:698px;width:104px;height:21px;background:#ffffe1;"></div>
<span class="t b" style="left:566px;top:702px;letter-spacing:0.35px;">011403129</span>
<span class="t" style="left:675px;top:683px;letter-spacing:0.10px;">Cod.Flete</span>
<div class="s" style="left:675px;top:698px;width:88px;height:21px;background:#ffffe1;"></div>
<span class="t b" style="left:678px;top:702px;letter-spacing:0.26px;">0114F03118</span>
<span class="t" style="left:771px;top:683px;letter-spacing:0.12px;">Tipo de Flete</span>
<div class="s" style="left:771px;top:698px;width:105px;height:21px;background:#d4d0c8;"></div>
<span class="t" style="left:774px;top:702px;letter-spacing:0.52px;">DIRECTO</span>
<span class="t" style="left:883px;top:683px;letter-spacing:0.09px;">Gestor del Flete</span>
<div class="s" style="left:883px;top:698px;width:249px;height:21px;background:#d4d0c8;"></div>
<span class="t" style="left:886px;top:702px;letter-spacing:0.75px;">DAVID</span>
<svg style="left:1137px;top:694px" width="25" height="25" viewBox="0 0 25 25" preserveAspectRatio="none"><rect width="25" height="25" fill="#008888"/><path d="M6.1 3.8L9.9 0M16 8.9l5.8-6.1" stroke="#d8f0f0" stroke-width=".9"/><path d="M6.1 5.2l2.4-1.2 7.5 5.6v2.1l-3.6 3.1-6.3-6.6zM7 12.5l1.5 2 3.2 2.9 6.8-6.2 1.5-.2-.3 2.6-5.7 6.9-3 2-4-1.5-1.4-5zM1 25l.2-6.7 2.6-2.3 1.4 2.3.4 3.7 2.9 3zM13.6 25l5.6-6.7 3.8 3.7v3z" fill="#d8f0f0"/><path d="M6.5 18.3h2M5.8 19.5q1.2 2.5 4.2 3 3-1 7.5-5.3M13 24.5l5.5-6" stroke="#000" fill="none" stroke-width=".9"/><ellipse cx="9.6" cy="23.6" rx="2.2" ry="1.4"/></svg>
</div></body></html>
